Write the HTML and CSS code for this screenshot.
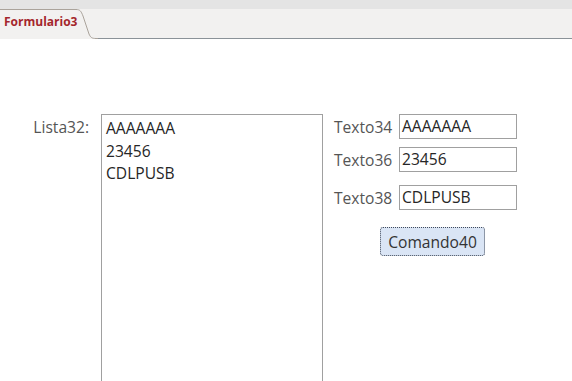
FILE: index.html
```html
<!DOCTYPE html>
<html lang="es">
<head>
  <meta charset="UTF-8" />
  <title>Formulario3</title>
  <link rel="stylesheet" href="styles.css">
</head>
<body>

<div class="top-strip"></div>

<div class="tab-bar">
  <div class="tab">Formulario3</div>
  <svg class="tab-edge" width="24" height="30" viewBox="0 0 24 30">
    <path d="M0 0.5 H2 C6 0.5 7 2 9 7 L15 25 C16.5 28.5 18 29.5 22 29.5 H24" fill="none" stroke="#aaa39b" stroke-width="1" />
  </svg>
  <div class="tab-rest"></div>
</div>

<div class="form">
  <div class="list-group">
    <label class="caption">Lista32:</label>
    <div class="listbox">
      <div class="item">AAAAAAA</div>
      <div class="item">23456</div>
      <div class="item">CDLPUSB</div>
    </div>
  </div>

  <div class="fields">
    <div class="field">
      <label class="caption">Texto34</label>
      <div class="textbox">AAAAAAA</div>
    </div>
    <div class="field">
      <label class="caption">Texto36</label>
      <div class="textbox">23456</div>
    </div>
    <div class="field third">
      <label class="caption">Texto38</label>
      <div class="textbox">CDLPUSB</div>
    </div>
    <button class="command">Comando40</button>
  </div>
</div>

</body>
</html>
```

FILE: styles.css
```css
* {
  box-sizing: border-box;
}
body {
  margin: 0;
  background-color: #ffffff;
  font-family: "Open Sans", "Noto Sans", sans-serif;
  overflow: hidden;
}
.top-strip {
  height: 9px;
  background-color: #e4e4e4;
}
.tab-bar {
  display: flex;
  height: 30px;
  background-color: #f2f1f0;
}
.tab {
  width: 74px;
  border-top: 1px solid #aaa39b;
  padding: 3px 0 0 4px;
  font-size: 12px;
  font-weight: bold;
  color: #a4262c;
  white-space: nowrap;
}
.tab-edge {
  display: block;
  flex: none;
}
.tab-rest {
  flex: 1;
  border-bottom: 1px solid #8b9298;
}
.form {
  display: flex;
  padding: 75px 0 0 32px;
  font-size: 15.6px;
}
.list-group {
  display: flex;
  gap: 12px;
}
.caption {
  color: #555555;
  white-space: nowrap;
}
.list-group .caption {
  width: 57px;
  text-align: right;
  padding-top: 2px;
  line-height: 22px;
}
.listbox {
  width: 222px;
  height: 268px;
  border: 1px solid #a0a0a0;
  padding: 2px 0 0 4px;
  color: #262626;
}
.item {
  line-height: 22.5px;
}
.fields {
  display: flex;
  flex-direction: column;
  margin-left: 11px;
}
.field {
  display: flex;
  align-items: center;
  margin-bottom: 8px;
}
.field .caption {
  width: 65px;
}
.field.third {
  margin-top: 5px;
}
.textbox {
  width: 118px;
  height: 25px;
  border: 1px solid #a0a0a0;
  padding-left: 2px;
  line-height: 23px;
  color: #262626;
}
.command {
  margin: 9px 0 0 46px;
  width: 105px;
  height: 29px;
  font-family: inherit;
  font-size: 15.6px;
  color: #333333;
  background-color: #dae5f5;
  border: 1px dotted #404a5a;
  border-radius: 3px;
  padding: 0;
}
```
